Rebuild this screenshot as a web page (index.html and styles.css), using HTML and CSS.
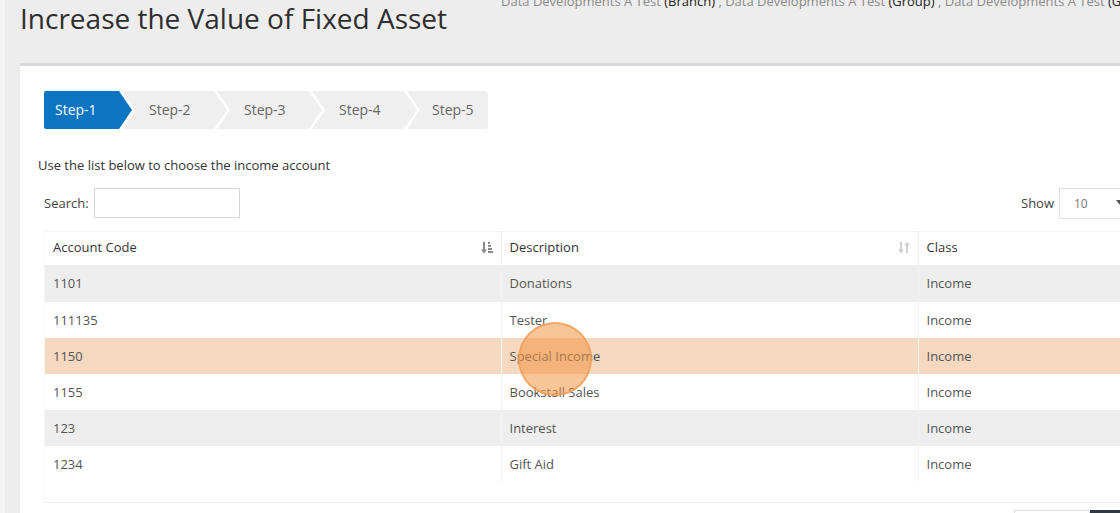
FILE: index.html
```html
<!DOCTYPE html>
<html lang="en">
<head>
    <meta charset="UTF-8">
    <meta name="viewport" content="width=device-width, initial-scale=1.0">
    <title>Increase the Value of Fixed Asset</title>
    <link rel="stylesheet" href="styles.css">
</head>
<body>
<div class="page">

    <header class="page-header">
        <h1 class="page-title">Increase the Value of Fixed Asset</h1>
        <div class="org-list">
            Data Developments A Test <b>(Branch)</b> , Data Developments A Test <b>(Group)</b> , Data Developments A Test <b>(Group)</b>
        </div>
    </header>

    <main class="panel">
        <!-- Wizard steps -->
        <div class="wizard">
            <div class="step step-first active">Step-1</div>
            <div class="step">Step-2</div>
            <div class="step">Step-3</div>
            <div class="step">Step-4</div>
            <div class="step step-last">Step-5</div>
        </div>

        <p class="hint">Use the list below to choose the income account</p>

        <div class="table-tools">
            <label class="search">Search: <input type="text" class="search-input"></label>
            <div class="length">
                <span>Show</span>
                <span class="fake-select">10
                    <svg class="caret" width="8" height="6" viewBox="0 0 8 6"><path d="M0 0h8L4 5z" fill="#555"/></svg>
                </span>
                <span>entries</span>
            </div>
        </div>

        <div class="table-wrap">
            <table class="accounts">
                <colgroup>
                    <col class="col-code">
                    <col class="col-desc">
                    <col class="col-class">
                </colgroup>
                <thead>
                    <tr>
                        <th>Account Code
                            <svg class="sort-icon sort-on" width="12" height="13" viewBox="0 0 12 13">
                                <path d="M3 1v9" stroke="currentColor" stroke-width="2"/>
                                <path d="M0 8.5h6L3 12.5z" fill="currentColor"/>
                                <path d="M7 2h2M7 5h3M7 8h4M7 11h5" stroke="currentColor" stroke-width="2"/>
                            </svg>
                        </th>
                        <th>Description
                            <svg class="sort-icon" width="12" height="13" viewBox="0 0 12 13">
                                <path d="M3 1v9" stroke="currentColor" stroke-width="2"/>
                                <path d="M0 8.5h6L3 12.5z" fill="currentColor"/>
                                <path d="M9 3v9" stroke="currentColor" stroke-width="2"/>
                                <path d="M6 4.5h6L9 0.5z" fill="currentColor"/>
                            </svg>
                        </th>
                        <th>Class</th>
                    </tr>
                </thead>
                <tbody>
                    <tr><td>1101</td><td>Donations</td><td>Income</td></tr>
                    <tr><td>111135</td><td>Tester</td><td>Income</td></tr>
                    <tr class="selected"><td>1150</td><td>Special Income</td><td>Income</td></tr>
                    <tr><td>1155</td><td>Bookstall Sales</td><td>Income</td></tr>
                    <tr><td>123</td><td>Interest</td><td>Income</td></tr>
                    <tr><td>1234</td><td>Gift Aid</td><td>Income</td></tr>
                </tbody>
            </table>
        </div>

        <div class="pager">
            <span class="pager-btn">Previous</span>
            <span class="pager-btn pager-current">1</span>
        </div>

        <!-- click marker from the recording -->
        <span class="click-mark"></span>
    </main>
</div>
</body>
</html>
```

FILE: styles.css
```css
/* Base */
* {
    margin: 0;
    padding: 0;
    box-sizing: border-box;
}

body {
    background-color: #eeeded;
    font-family: "Open Sans", "Noto Sans", Arial, sans-serif;
    color: #333;
    overflow: hidden;
    height: 100vh;
}

.page {
    border-left: 5px solid #f5f5f5;
    padding-left: 15px;
}

/* Header */
.page-header {
    display: flex;
    align-items: flex-start;
    height: 63px;
    white-space: nowrap;
}

.page-title {
    flex: 0 0 481px;
    font-size: 28px;
    font-weight: 400;
    line-height: 36px;
    color: #2e2e2e;
}

.org-list {
    margin-top: -8px;
    font-size: 13px;
    line-height: 18px;
    color: #8a8a8a;
}

.org-list b {
    font-weight: 400;
    color: #222;
}

/* Panel */
.panel {
    position: relative;
    background: #fff;
    border-top: 3px solid #d9d9dd;
    padding: 25px 0 0 24px;
    height: 460px;
}

/* Wizard */
.wizard {
    display: flex;
    height: 38px;
}

.step {
    width: 105px;
    height: 38px;
    margin-right: -10px;
    padding-left: 27px;
    background: #efefef;
    color: #666;
    font-size: 14px;
    line-height: 38px;
    clip-path: polygon(0 0, calc(100% - 13px) 0, 100% 50%, calc(100% - 13px) 100%, 0 100%, 13px 50%);
}

.step-first {
    width: 88px;
    padding-left: 11px;
    border-radius: 2px 0 0 2px;
    clip-path: polygon(0 0, calc(100% - 13px) 0, 100% 50%, calc(100% - 13px) 100%, 0 100%);
}

.step-last {
    width: 81px;
    margin-right: 0;
    padding-left: 25px;
    border-radius: 0 3px 3px 0;
    clip-path: polygon(0 0, 100% 0, 100% 100%, 0 100%, 13px 50%);
}

.step.active {
    background: #0b74c3;
    color: #fff;
}

.hint {
    margin: 27px 0 0 -6px;
    font-size: 13px;
    line-height: 18px;
    color: #333;
}

/* Table tools */
.table-tools {
    display: flex;
    justify-content: space-between;
    align-items: center;
    width: 1140px;
    margin-top: 15px;
    height: 30px;
    font-size: 13px;
    color: #444;
}

.search {
    display: flex;
    align-items: center;
    gap: 5px;
    margin-top: -2px;
}

.search-input {
    width: 146px;
    height: 30px;
    border: 1px solid #d6d6d6;
    outline: none;
}

.length {
    display: flex;
    align-items: center;
    gap: 5px;
    margin-right: 8px;
    margin-top: -2px;
}

.fake-select {
    display: flex;
    align-items: center;
    justify-content: space-between;
    width: 70px;
    height: 31px;
    padding: 0 4px 0 14px;
    border: 1px solid #e1e1e1;
    color: #777;
    font-size: 12px;
}

/* Table */
.table-wrap {
    width: 1140px;
    margin-top: 12px;
    padding-bottom: 20px;
    border-bottom: 1px solid #f0efef;
    border-left: 1px solid #f6f6f6;
}

.accounts {
    width: 100%;
    border-collapse: collapse;
    table-layout: fixed;
    font-size: 13px;
}

.col-code  { width: 456px; }
.col-desc  { width: 417px; }
.col-class { width: 267px; }

.accounts th {
    position: relative;
    height: 33px;
    padding: 0 8px 2px;
    text-align: left;
    font-weight: 400;
    color: #333;
    border-top: 1px solid #f3f3f3;
    border-right: 1px solid #f0f0f0;
}

.accounts td {
    height: 36px;
    padding: 0 8px;
    color: #555;
    border-right: 1px solid #f3f3f3;
}

.accounts tbody tr:first-child td {
    height: 37px;
}

.accounts tbody tr:nth-child(odd) {
    background: #efeeee;
}

.accounts tbody tr.selected {
    background: #f5d8c0;
}

.sort-icon {
    position: absolute;
    right: 8px;
    top: 9px;
    color: #d0d0d0;
}

.sort-icon.sort-on {
    color: #8a8a8a;
}

/* Pager */
.pager {
    display: flex;
    justify-content: flex-end;
    width: 1140px;
    margin-top: 7px;
}

.pager-btn {
    width: 76px;
    height: 30px;
    border: 1px solid #ddd;
    font-size: 13px;
    line-height: 30px;
    text-align: center;
    color: #555;
}

.pager-current {
    width: 94px;
    background: #2f3a43;
    border-color: #2f3a43;
    color: #fff;
}

/* Click marker */
.click-mark {
    position: absolute;
    left: 498px;
    top: 256px;
    width: 74px;
    height: 74px;
    border-radius: 50%;
    background: rgba(243, 150, 66, 0.55);
    border: 2px solid rgba(240, 160, 90, 0.8);
}
```
